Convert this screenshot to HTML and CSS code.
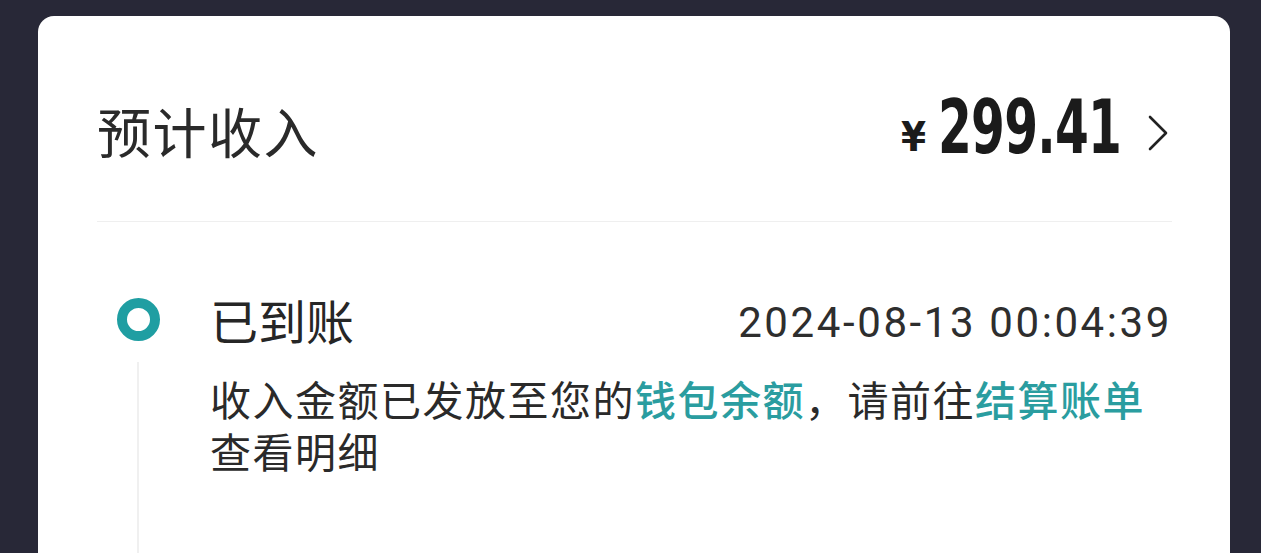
FILE: index.html
```html
<!DOCTYPE html>
<html lang="zh-CN">
  <head>
    <meta charset="utf-8" />
    <title>预计收入</title>
    <link rel="stylesheet" href="styles.css">
  </head>
  <body>
    <div class="card">
      <div class="income-header">
        <h1 class="income-title">预计收入</h1>
        <a class="income-amount" href="#">
          <span class="currency">¥</span>
          <span class="amount">299.41</span>
          <svg class="chevron" width="22" height="38" viewBox="0 0 22 38">
            <path d="M3 3 L19 19 L3 35" fill="none" stroke="#222" stroke-width="2.6" stroke-linecap="round" stroke-linejoin="round" />
          </svg>
        </a>
      </div>

      <div class="timeline">
        <div class="timeline-rail">
          <span class="dot"></span>
          <span class="rail-line"></span>
        </div>
        <div class="timeline-body">
          <div class="status-row">
            <span class="status">已到账</span>
            <span class="status-time">2024-08-13 00:04:39</span>
          </div>
          <p class="status-desc">
            收入金额已发放至您的<a href="#" class="link">钱包余额</a>，请前往<a href="#" class="link">结算账单</a>查看明细
          </p>
        </div>
      </div>
    </div>
  </body>
</html>
```

FILE: styles.css
```css
body {
  margin: 0;
  height: 553px;
  overflow: hidden;
  background-color: #282837;
  padding: 16px 31px 0 38px;
  box-sizing: border-box;
  font-family: "Noto Sans CJK SC", "Noto Sans", sans-serif;
  color: #222222;
}

.card {
  background-color: #ffffff;
  border-radius: 16px 16px 0 0;
  padding: 0 58px 0 59px;
  height: 560px;
  box-sizing: border-box;
}

.income-header {
  display: flex;
  align-items: center;
  justify-content: space-between;
  height: 181px;
  padding-top: 24px;
  border-bottom: 1px solid #efefef;
}

.income-title {
  margin: 0;
  font-size: 54px;
  font-weight: 400;
  letter-spacing: 1.5px;
  color: #2a2a2a;
}

.income-amount {
  display: flex;
  align-items: center;
  text-decoration: none;
  color: #1b1b1b;
  margin-right: 3px;
}

.currency {
  font-family: "DejaVu Sans Condensed", "Liberation Sans", sans-serif;
  font-weight: bold;
  font-size: 40px;
  margin-top: 12px;
  margin-right: 12px;
}

/* condensed digits: squeeze the bold face, keep layout width */
.amount {
  display: inline-block;
  font-family: "DejaVu Sans Condensed", sans-serif;
  font-weight: bold;
  font-size: 74px;
  line-height: 1;
  letter-spacing: -1px;
  transform: scaleX(0.73);
  transform-origin: left center;
  margin-right: -66px;
  margin-top: -8px;
}

.chevron {
  margin-left: 24px;
  margin-top: 4px;
}

.timeline {
  display: grid;
  grid-template-columns: 113px 1fr;
  padding-top: 76px;
}

.timeline-rail {
  display: flex;
  flex-direction: column;
  align-items: center;
  width: 82px;
}

.dot {
  width: 23px;
  height: 23px;
  border: 10px solid #1f9ea2;
  border-radius: 50%;
}

.rail-line {
  width: 2px;
  height: 260px;
  margin-top: 21px;
  background-color: #f0f0f0;
}

.status-row {
  display: flex;
  align-items: center;
  justify-content: space-between;
  height: 56px;
  margin-top: -7px;
}

.status {
  font-size: 48px;
  color: #262626;
}

.status-time {
  font-family: "Roboto", "Noto Sans", sans-serif;
  font-size: 42px;
  letter-spacing: 2.6px;
  color: #2e2e2e;
  margin-top: 6px;
}

.status-desc {
  margin: 25px 0 0;
  font-size: 41px;
  line-height: 52px;
  letter-spacing: 1.5px;
  color: #2a2a2a;
}

.link {
  color: #2a9da0;
  font-weight: 500;
  text-decoration: none;
}
```
